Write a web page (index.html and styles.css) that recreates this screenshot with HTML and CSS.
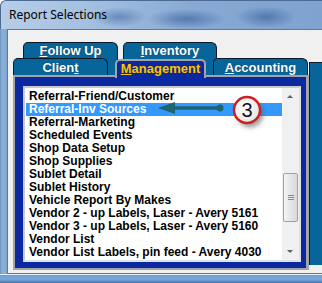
FILE: index.html
```html
<!DOCTYPE html>
<html lang="en">
<head>
  <meta charset="UTF-8" />
  <title>Report Selections</title>
  <link rel="stylesheet" href="styles.css">
</head>
<body>
  <div class="window">
    <div class="titlebar">
      <span class="title">Report Selections</span>
    </div>

    <div class="client">
      <div class="tabs">
        <div class="row back">
          <div class="tab tab-follow"><u>F</u>ollow Up</div>
          <div class="tab tab-inv"><u>I</u>nventory</div>
        </div>
        <div class="row front">
          <div class="tab tab-client">Clien<u>t</u></div>
          <div class="tab tab-mgmt active"><u>M</u>anagement</div>
          <div class="tab tab-acct"><u>A</u>ccounting</div>
        </div>
        <div class="strip"></div>

        <div class="panel">
          <div class="listbox">
            <ul class="items">
              <li>Referral-Friend/Customer</li>
              <li class="selected">Referral-Inv Sources</li>
              <li>Referral-Marketing</li>
              <li>Scheduled Events</li>
              <li>Shop Data Setup</li>
              <li>Shop Supplies</li>
              <li>Sublet Detail</li>
              <li>Sublet History</li>
              <li>Vehicle Report By Makes</li>
              <li>Vendor 2 - up Labels, Laser - Avery 5161</li>
              <li>Vendor 3 - up Labels, Laser - Avery 5160</li>
              <li>Vendor List</li>
              <li>Vendor List Labels, pin feed - Avery 4030</li>
            </ul>
            <div class="scrollbar">
              <div class="arrow up"></div>
              <div class="track">
                <div class="thumb"><span class="grip"></span></div>
              </div>
              <div class="arrow down"></div>
            </div>
          </div>
        </div>
      </div>
    </div>

    <div class="frame-bottom"></div>

    <!-- step callout -->
    <svg class="callout" width="322" height="283" viewBox="0 0 322 283">
      <defs>
        <filter id="shadow" x="-50%" y="-50%" width="200%" height="200%">
          <feGaussianBlur stdDeviation="2" />
        </filter>
        <radialGradient id="face" cx="40%" cy="35%" r="70%">
          <stop offset="0" stop-color="#ffffff" />
          <stop offset="1" stop-color="#e4e4e4" />
        </radialGradient>
      </defs>
      <line x1="172" y1="108" x2="220" y2="108" stroke="#1f6570" stroke-width="3.5" />
      <circle cx="220" cy="108" r="3.5" fill="#1f6570" />
      <polygon points="158,108 175,102 175,114" fill="#1f6570" />
      <circle cx="250" cy="114" r="13.5" fill="#555" opacity="0.55" filter="url(#shadow)" />
      <circle cx="247" cy="110" r="13" fill="url(#face)" stroke="#cf1f1f" stroke-width="2.5" />
      <text x="247" y="117" text-anchor="middle" class="step">3</text>
    </svg>
  </div>
</body>
</html>
```

FILE: styles.css
```css
html, body {
  margin: 0;
  padding: 0;
  width: 322px;
  height: 283px;
  overflow: hidden;
  background: #ffffff;
}

.window {
  position: relative;
  width: 322px;
  height: 283px;
  display: flex;
  flex-direction: column;
  border-top-left-radius: 6px;
  background: linear-gradient(90deg, #6f97c6 0px, #8fb2da 3px, #7ea4d0 7px);
  overflow: hidden;
}

.titlebar {
  height: 29px;
  flex: none;
  padding-left: 8px;
  box-sizing: border-box;
  border-top-left-radius: 6px;
  border-top: 1px solid #4c6b93;
  border-left: 1px solid #4c6b93;
  background:
    radial-gradient(ellipse 28px 10px at 118px 16px, rgba(60, 100, 160, 0.55), transparent),
    radial-gradient(ellipse 40px 10px at 185px 18px, rgba(50, 90, 150, 0.6), transparent),
    radial-gradient(ellipse 30px 11px at 265px 16px, rgba(50, 90, 150, 0.6), transparent),
    linear-gradient(90deg, #b6cde8 0%, #a2bedf 30%, #87a9d3 60%, #7fa3cf 100%);
}

.title {
  display: block;
  font-family: "Noto Sans", sans-serif;
  font-size: 12px;
  line-height: 14px;
  padding-top: 7px;
  color: #000;
}

.client {
  flex: none;
  height: 245px;
  margin-left: 7px;
  box-sizing: border-box;
  border-top: 1px solid #5b7aa0;
  border-left: 1px solid #5b7aa0;
  border-bottom: 1px solid #5b7aa0;
  background: #f0f0f0;
}

.frame-bottom {
  flex: 1;
  border-top: 1px solid #e8eef6;
  background: linear-gradient(180deg, #6e9bd3 0px, #7aa7dc 4px, #5c86bd 7px, #2f4f7a 9px);
}

/* tab control */
.tabs {
  display: grid;
  grid-template-columns: 5px 296px 1fr;
  grid-template-rows: 12px 16px 17px 195px 1fr;
  height: 100%;
}

.row {
  display: flex;
  gap: 7px;
  grid-column: 2;
}

.row.back {
  grid-row: 2 / 4;
  padding-left: 10px;
  gap: 5px;
}

.row.front {
  grid-row: 3;
  z-index: 2;
}

.tab {
  box-sizing: border-box;
  height: 100%;
  width: 95px;
  border: 1px solid #0b1a2a;
  border-bottom: none;
  border-radius: 5px 6px 0 0;
  background: #07659a;
  color: #fff;
  font-family: "Liberation Sans", Arial, sans-serif;
  font-weight: bold;
  font-size: 13px;
  line-height: 15px;
  text-align: center;
  text-shadow: 0 0 1px #0a2a40;
}

.tab u {
  text-decoration-thickness: 1px;
  text-underline-offset: 1px;
}

.tab-inv {
  width: 94px;
}

.row.front .tab {
  padding-top: 1px;
}

.tab-mgmt.active {
  width: 91px;
  height: 19px;
  margin-top: 1px;
  border: 2px solid #a4a4a4;
  border-bottom: none;
  border-radius: 5px 5px 0 0;
  background: #0a28a0;
  color: #f8c414;
  padding-top: 0 !important;
  text-shadow: 0 0 1px #3a2a00;
  position: relative;
  z-index: 3;
}

.strip {
  grid-column: 3;
  grid-row: 3 / 5;
  margin-top: 4px;
  margin-bottom: 5px;
  border-top: 1px solid #0b1a2a;
  border-left: 1px solid #0b1a2a;
  background: #07659a;
}

.panel {
  grid-column: 2;
  grid-row: 4;
  box-sizing: border-box;
  border: 2px solid #a4a4a4;
  border-right-width: 3px;
  background: #0a28a0;
  padding: 9px 0 0 8px;
}

/* list box */
.listbox {
  width: 278px;
  height: 176px;
  box-sizing: border-box;
  border: 2px solid #c9c9c9;
  border-right-color: #e2e2e2;
  border-bottom-color: #e2e2e2;
  background: #fff;
  display: flex;
}

.items {
  flex: 1;
  list-style: none;
  margin: 0;
  padding: 2px 0 0 1px;
  font-family: "Liberation Sans", Arial, sans-serif;
  font-weight: bold;
  font-size: 12px;
  line-height: 13px;
  color: #000;
  white-space: nowrap;
  overflow: hidden;
}

.items li {
  height: 13px;
  padding-left: 3px;
}

.items li.selected {
  background: #3399ff;
  color: #fff;
}

.scrollbar {
  width: 17px;
  flex: none;
  display: flex;
  flex-direction: column;
  background: #f0f0f0;
}

.arrow {
  height: 17px;
  flex: none;
  position: relative;
}

.arrow::after {
  content: "";
  position: absolute;
  left: 5px;
  top: 7px;
  border-left: 3px solid transparent;
  border-right: 3px solid transparent;
}

.arrow.up::after {
  border-bottom: 3px solid #606060;
}

.arrow.down::after {
  border-top: 3px solid #606060;
}

.track {
  flex: 1;
  padding-top: 68px;
}

.thumb {
  box-sizing: border-box;
  width: 15px;
  height: 49px;
  margin-left: 1px;
  border: 1px solid #a0a0a0;
  border-radius: 2px;
  background: linear-gradient(90deg, #f4f4f4, #e6e6e6 50%, #d8d8d8);
  display: flex;
  align-items: center;
  justify-content: center;
}

.grip {
  width: 6px;
  height: 5px;
  background: repeating-linear-gradient(180deg, #8a8a8a 0 1px, transparent 1px 2px);
}

.callout {
  position: absolute;
  left: 0;
  top: 0;
  pointer-events: none;
  z-index: 5;
}

.step {
  font-family: "Liberation Sans", Arial, sans-serif;
  font-size: 20px;
  fill: #111;
}
```
